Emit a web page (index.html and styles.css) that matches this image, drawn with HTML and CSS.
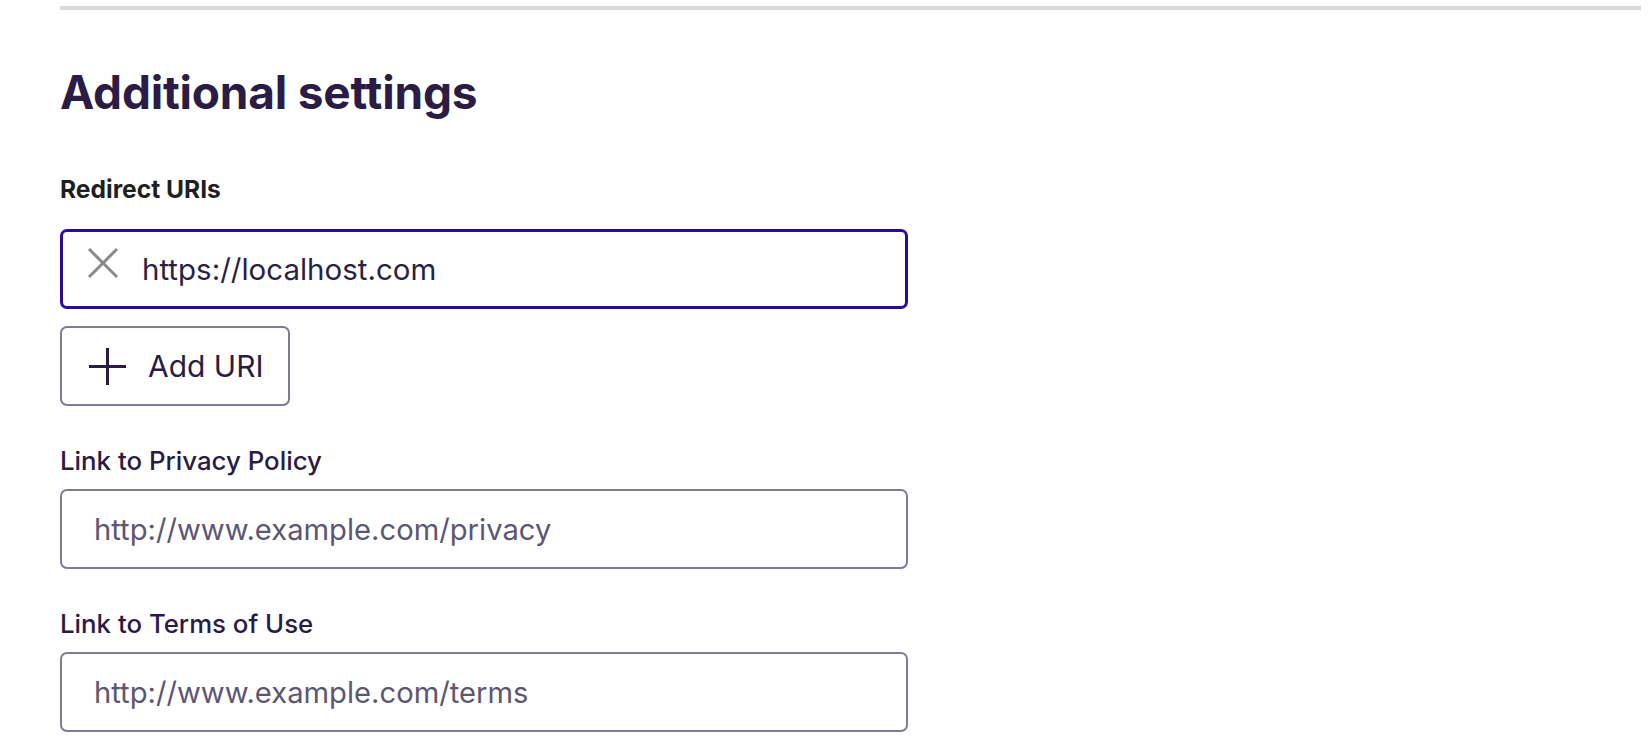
FILE: index.html
```html
<!DOCTYPE html>
<html lang="en">
<head>
<meta charset="utf-8">
<title>Additional settings</title>
<link rel="stylesheet" href="styles.css">
</head>
<body>
<div class="page">
  <div class="rule"></div>
  <section class="settings">
    <h2 class="title">Additional settings</h2>

    <div class="field field-first">
      <label class="label label-strong">Redirect URIs</label>
      <div class="uri-box uri-box-focused">
        <button class="remove-btn" type="button" aria-label="Remove">
          <svg width="34" height="34" viewBox="0 0 34 34" aria-hidden="true">
            <path d="M3 3 L31 31 M31 3 L3 31" stroke="#8a8a8a" stroke-width="3" fill="none"/>
          </svg>
        </button>
        <input class="uri-input" type="text" value="https://localhost.com">
      </div>
      <button class="add-btn" type="button">
        <svg class="plus" width="37" height="37" viewBox="0 0 37 37" aria-hidden="true">
          <path d="M18.5 0 V37 M0 18.5 H37" stroke="#2a1b45" stroke-width="3" fill="none"/>
        </svg>
        <span>Add URI</span>
      </button>
    </div>

    <div class="field">
      <label class="label">Link to Privacy Policy</label>
      <input class="text-input" type="text" placeholder="http://www.example.com/privacy">
    </div>

    <div class="field">
      <label class="label">Link to Terms of Use</label>
      <input class="text-input" type="text" placeholder="http://www.example.com/terms">
    </div>
  </section>
</div>
</body>
</html>
```

FILE: styles.css
```css
* { box-sizing: border-box; }

html, body {
  margin: 0;
  padding: 0;
  background: #ffffff;
}

body {
  font-family: Inter, "Noto Sans", sans-serif;
  color: #2a1b45;
}

.page {
  padding: 6px 9px 0 60px;
}

.rule {
  height: 4px;
  background: #d9d9d9;
}

.settings {
  display: flex;
  flex-direction: column;
  width: 848px;
}

.title {
  margin: 55px 0 0 0;
  font-size: 46px;
  line-height: 54px;
  font-weight: 700;
  color: #2b1c45;
  letter-spacing: -0.2px;
}

.field {
  display: flex;
  flex-direction: column;
  align-items: flex-start;
  margin-top: 37px;
}

.field-first {
  margin-top: 52px;
}

.label {
  font-size: 25.8px;
  line-height: 36px;
  font-weight: 500;
  color: #2a1b45;
  margin-bottom: 10px;
}

.label-strong {
  font-size: 24.6px;
  font-weight: 700;
  color: #1f1f1f;
  margin-bottom: 22px;
}

.uri-box {
  display: flex;
  align-items: center;
  width: 848px;
  height: 80px;
  border: 3px solid #2a0b99;
  border-radius: 7px;
  padding-left: 23px;
}

.remove-btn {
  display: flex;
  align-items: center;
  justify-content: center;
  width: 34px;
  height: 34px;
  padding: 0;
  margin-top: -13px;
  border: none;
  background: none;
}

.uri-input {
  flex: 1;
  border: none;
  outline: none;
  margin-left: 22px;
  padding: 0;
  font-family: inherit;
  font-size: 29.5px;
  color: #2a1f45;
  background: transparent;
}

.add-btn {
  display: flex;
  align-items: center;
  gap: 22px;
  margin-top: 17px;
  height: 80px;
  padding: 0 24px 0 27px;
  border: 2px solid #817a94;
  border-radius: 7px;
  background: #ffffff;
  font-family: inherit;
  font-size: 30px;
  color: #2a1b45;
}

.plus { flex: none; }

.text-input {
  width: 848px;
  height: 80px;
  border: 2px solid #817a94;
  border-radius: 7px;
  padding: 0 0 0 32px;
  font-family: inherit;
  font-size: 29.2px;
  color: #2a1f45;
  outline: none;
  background: #ffffff;
}

.text-input::placeholder {
  color: #5d5673;
  opacity: 1;
}
```
